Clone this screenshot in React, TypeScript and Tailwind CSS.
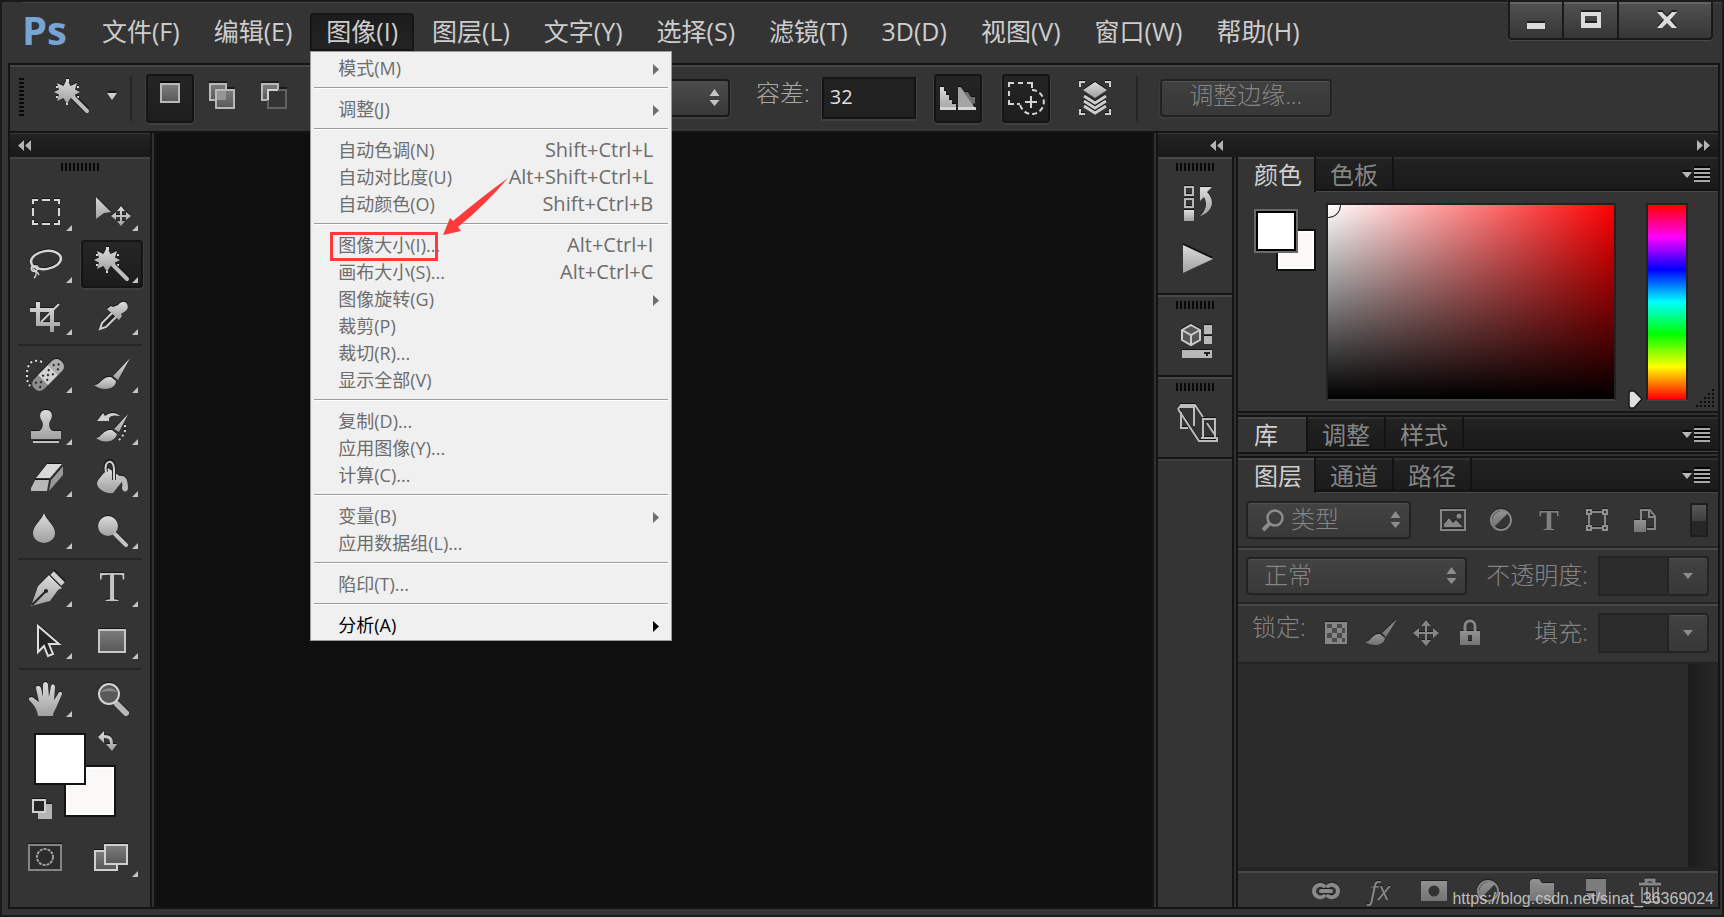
import { useState } from 'react';
import type { ReactNode } from 'react';
import clsx from 'clsx';

const menus = ['文件(F)', '编辑(E)', '图像(I)', '图层(L)', '文字(Y)', '选择(S)', '滤镜(T)', '3D(D)', '视图(V)', '窗口(W)', '帮助(H)'];

type MenuEntry = { label: string; keys?: string; sub?: boolean; enabled?: boolean; marked?: boolean };

const imageMenu: MenuEntry[][] = [
  [{ label: '模式(M)', sub: true }],
  [{ label: '调整(J)', sub: true }],
  [
    { label: '自动色调(N)', keys: 'Shift+Ctrl+L' },
    { label: '自动对比度(U)', keys: 'Alt+Shift+Ctrl+L' },
    { label: '自动颜色(O)', keys: 'Shift+Ctrl+B' },
  ],
  [
    { label: '图像大小(I)...', keys: 'Alt+Ctrl+I', marked: true },
    { label: '画布大小(S)...', keys: 'Alt+Ctrl+C' },
    { label: '图像旋转(G)', sub: true },
    { label: '裁剪(P)' },
    { label: '裁切(R)...' },
    { label: '显示全部(V)' },
  ],
  [{ label: '复制(D)...' }, { label: '应用图像(Y)...' }, { label: '计算(C)...' }],
  [{ label: '变量(B)', sub: true }, { label: '应用数据组(L)...' }],
  [{ label: '陷印(T)...' }],
  [{ label: '分析(A)', sub: true, enabled: true }],
];

// Shared gradients, referenced by id from every icon
function IconDefs() {
  return (
    <svg className="absolute size-0" aria-hidden="true">
      <defs>
        <linearGradient id="metal" x1="0" y1="0" x2="0" y2="1">
          <stop offset="0" stopColor="#dcdcdc" />
          <stop offset="1" stopColor="#a0a0a0" />
        </linearGradient>
        <linearGradient id="fill" x1="0" y1="0" x2="0" y2="1">
          <stop offset="0" stopColor="#7d7d7d" />
          <stop offset="1" stopColor="#585858" />
        </linearGradient>
        <linearGradient id="dim" x1="0" y1="0" x2="0" y2="1">
          <stop offset="0" stopColor="#929292" />
          <stop offset="1" stopColor="#747474" />
        </linearGradient>
      </defs>
    </svg>
  );
}

function WandShape() {
  return (
    <>
      <path d="M28 9l3.5 7 6.5-3-2 6.5 5 2.5-5 2.5 2 6.5-6.5-3-3.5 6-3.5-6-6.5 3 2-6.5-5-2.5 5-2.5-2-6.5 6.5 3z" fill="url(#metal)" />
      <path d="M27 9h3v3h-3zM17 16h2v2h-2zM38 16h2v2h-2zM17 26h2v2h-2zM38 26h2v2h-2zM27 33h2v2h-2z" fill="#d8d8d8" />
      <path d="M35 28l13 13" stroke="#1c1c1c" strokeWidth="6" />
      <path d="M35 28l13 13" stroke="#bdbdbd" strokeWidth="4" strokeLinecap="round" />
    </>
  );
}

const tools: { name: string; icon: ReactNode; plain?: boolean }[][] = [
  [
    { name: '矩形选框工具', icon: <path d="M20 18v-4h5M29 14h8M41 14h5v4M46 22v8M46 34v4h-5M37 38h-8M25 38h-5v-4M20 30v-8" fill="none" stroke="#dadada" strokeWidth="2" /> },
    {
      name: '移动工具',
      icon: (
        <>
          <path d="M17 11l15 15-7 1-8 6z" fill="url(#metal)" />
          <path d="M42 20l4 5h-3v4h4v-3l5 4-5 4v-3h-4v4h3l-4 5-4-5h3v-4h-4v3l-5-4 5-4v3h4v-4h-3z" fill="url(#metal)" />
        </>
      ),
    },
    {
      name: '套索工具',
      icon: (
        <g fill="none" stroke="#d6d6d6">
          <ellipse cx="33" cy="22" rx="15" ry="9" strokeWidth="2.5" transform="rotate(-9 33 22)" />
          <path d="M19 28c-2 3 0 6 3 5s4-4 2-5-5 1-4 3c3 2 5 3 6 6M22 33c2 2 1 5-1 7" strokeWidth="1.5" />
        </g>
      ),
    },
    { name: '魔棒工具', icon: <WandShape /> },
    {
      name: '裁剪工具',
      icon: (
        <>
          <path d="M17 18h24v24h-4V22H17zM23 12h4v20h20v4H23z" fill="url(#metal)" />
          <path d="M28 32l18-18" stroke="#cfcfcf" strokeWidth="2" />
        </>
      ),
    },
    {
      name: '吸管工具',
      icon: (
        <>
          <path d="M34 22l-11 11-2 6 6-2 11-11" fill="#262626" stroke="#cfcfcf" strokeWidth="2" />
          <path d="M39 15c2-3 7-5 9-1s0 6-3 8l-3 2 1 2-3 4-12-11 4-3 2 1z" fill="url(#metal)" />
        </>
      ),
    },
  ],
  [
    {
      name: '污点修复画笔工具',
      icon: (
        <>
          <g transform="rotate(-45 35 27)">
            <rect x="16" y="20" width="38" height="14" rx="6" fill="#8d8d8d" />
            <rect x="28" y="20" width="14" height="14" fill="#d2d2d2" />
            <path d="M42 20h6a6 6 0 0 1 6 6v2a6 6 0 0 1-6 6h-6z" fill="#adadad" />
            <path d="M20 23h2v2h-2zM20 29h2v2h-2zM24 26h2v2h-2zM30 23h2v2h-2zM30 29h2v2h-2zM34 26h2v2h-2zM38 23h2v2h-2zM38 29h2v2h-2zM45 23h2v2h-2zM45 29h2v2h-2zM49 26h2v2h-2z" fill="#262626" />
          </g>
          <path d="M29 14c-10-4-15 2-15 12v6l3 6" fill="none" stroke="#e0e0e0" strokeWidth="2" strokeDasharray="2 3" />
        </>
      ),
    },
    {
      name: '画笔工具',
      icon: (
        <>
          <path d="M51 10l-12 22-5-4z" fill="url(#metal)" />
          <path d="M32 29l5 4c0 8-13 11-22 4 7 0 8-9 17-8z" fill="url(#metal)" />
        </>
      ),
    },
    {
      name: '仿制图章工具',
      icon: (
        <>
          <path d="M33 10c7 0 7 7 4 11-2 4 0 9 3 10h8v8H18v-8h8c3-1 5-6 3-10-3-4-3-11 4-11z" fill="url(#metal)" />
          <path d="M20 41h26v2H20z" fill="#c0c0c0" />
        </>
      ),
    },
    {
      name: '历史记录画笔工具',
      icon: (
        <>
          <path d="M49 14L40 32l-5-3z" fill="url(#metal)" />
          <path d="M33 30l5 4c-2 8-13 10-21 4 6-1 7-9 16-8z" fill="url(#metal)" />
          <path d="M24 13l2 3c5-4 11-4 15 0-5-1-9-1-11 2l0 3H18z" fill="#cfcfcf" />
          <path d="M46 25v6l-3 6-5 5" fill="none" stroke="#dadada" strokeWidth="2" strokeDasharray="2 3" />
        </>
      ),
    },
    {
      name: '橡皮擦工具',
      icon: (
        <>
          <path d="M34 12h15l-12 14H23z" fill="#d8d8d8" />
          <path d="M22 28h14l-2 11H18v-3z" fill="#b8b8b8" />
          <path d="M38 28l12-14v9L36 39z" fill="#989898" />
        </>
      ),
    },
    {
      name: '油漆桶工具',
      icon: (
        <>
          <path d="M19 28l10-12 16 11-11 14c-8 1-16-4-16-10z" fill="url(#metal)" />
          <path d="M27 20c-3-12 8-14 8-3v11" fill="none" stroke="#262626" strokeWidth="4" />
          <path d="M27 20c-3-12 8-14 8-3v11" fill="none" stroke="#d2d2d2" strokeWidth="2" />
          <path d="M40 24c7-1 9 4 9 12 0 5-6 4-6 0 1-5 0-8-5-9z" fill="#bcbcbc" />
        </>
      ),
    },
    { name: '模糊工具', icon: <path d="M31 9c2 7 11 12 11 20a11 10 0 0 1-22 0c0-8 9-13 11-20z" fill="url(#metal)" /> },
    {
      name: '减淡工具',
      icon: (
        <>
          <path d="M36 30l11 11" stroke="#c4c4c4" strokeWidth="4" strokeLinecap="round" />
          <circle cx="29" cy="22" r="10" fill="url(#metal)" />
        </>
      ),
    },
  ],
  [
    {
      name: '钢笔工具',
      icon: (
        <>
          <path d="M36 13l13 13-4 2-8 11-19 5 7-20z" fill="url(#metal)" />
          <path d="M19 43l14-14" stroke="#222" strokeWidth="2" />
          <circle cx="33" cy="29" r="2" fill="#222" />
          <path d="M39 11l11 11" stroke="#222" strokeWidth="7" />
          <path d="M39 11l11 11" stroke="#cfcfcf" strokeWidth="5" />
        </>
      ),
    },
    { name: '横排文字工具', icon: <text x="33" y="39" textAnchor="middle" fontFamily="Liberation Serif, serif" fontSize="42" fill="#c6c6c6">T</text> },
    { name: '路径选择工具', icon: <path d="M25 12v26l6-6 4 10 5-2-4-10h10z" fill="#262626" stroke="#dedede" strokeWidth="2" /> },
    { name: '矩形工具', icon: <rect x="20" y="16" width="26" height="22" fill="url(#fill)" stroke="#c6c6c6" strokeWidth="2" /> },
  ],
  [
    {
      name: '抓手工具',
      icon: <path d="M16 26c2-2 4-1 6 1l4 3-3-14c0-3 4-3 5 0l2 9V13c0-4 5-4 5 0l1 12 2-11c1-3 4-2 4 1l-1 13 4-6c1-3 4-3 4 0l-6 14c-2 4-3 5-3 8H25c-1-8-5-12-9-16z" fill="url(#metal)" />,
    },
    {
      name: '缩放工具',
      plain: true,
      icon: (
        <>
          <path d="M38 32l9 9" stroke="#b8b8b8" strokeWidth="6" strokeLinecap="round" />
          <circle cx="30" cy="22" r="10" fill="#5a5a5a" stroke="#d4d4d4" strokeWidth="2" />
          <path d="M22 20c4-5 12-5 16 0-3-1-12-1-16 0z" fill="#8a8a8a" />
        </>
      ),
    },
  ],
];

function Grip({ className }: { className?: string }) {
  return <div className={clsx('mx-auto h-2 w-[38px] bg-[repeating-linear-gradient(90deg,#080808_0_2px,transparent_2px_4px)]', className)} />;
}

function VDivider() {
  return <div className="w-1.5 shrink-0 border-x-2 border-[#141414] bg-[#303030]" />;
}

function Chevrons({ flip }: { flip?: boolean }) {
  return (
    <svg width="14" height="11" viewBox="0 0 14 11" className={clsx('drop-shadow-[0_-1px_0_#000]', flip && 'rotate-180')} aria-hidden="true">
      <path d="M6 0v11L0 5.500zM13 0v11L7 5.500z" fill="#b4b4b4" />
    </svg>
  );
}

function UpDown({ className }: { className?: string }) {
  return (
    <svg width="11" height="17" viewBox="0 0 11 17" className={clsx('pointer-events-none absolute', className)} fill="currentColor" aria-hidden="true">
      <path d="M5.500 0l5 7h-10zM5.500 17l-5-6h10z" />
    </svg>
  );
}

function MenuIcon() {
  return (
    <button type="button" aria-label="面板菜单" className="mr-2 ml-auto flex items-center">
      <svg width="28" height="16" viewBox="0 0 28 16" className="drop-shadow-[0_-2px_0_#050505]">
        <path d="M0 5h10l-5 6z" fill="#b8b8b8" />
        <path d="M12 1h16v2H12zM12 5h16v2H12zM12 9h16v2H12zM12 13h16v2H12z" fill="#a8a8a8" />
      </svg>
    </button>
  );
}

function Tabs({ labels }: { labels: string[] }) {
  return (
    <div className="flex h-[35px] bg-linear-to-b from-[#222] to-[#1a1a1a] shadow-[inset_0_-1px_0_#484848,inset_0_-3px_0_#131313,inset_0_2px_0_#303030]" role="tablist">
      {labels.map((label, i) => (
        <button
          key={label}
          type="button"
          role="tab"
          aria-selected={i === 0}
          className={clsx(
            'border-r-2 border-[#131313] text-2xl leading-none',
            i === 0
              ? 'min-w-[70px] bg-[#343434] pr-3 pl-4 text-left text-[#cfcfcf] shadow-[inset_0_2px_0_#484848]'
              : 'mb-[3px] px-3.5 pt-[3px] text-[#858585]',
          )}
        >
          {label}
        </button>
      ))}
      <MenuIcon />
    </div>
  );
}

function ImageMenu() {
  return (
    <div role="menu" className="absolute top-full left-0 z-20 w-[362px] border border-[#9a9a9a] bg-[#f0f0f0] pt-[3px] pb-px">
      {imageMenu.map((group, g) => (
        <div key={group[0].label}>
          {g > 0 && <hr className="mx-[3px] mt-[5px] mb-[7px] h-0.5 border-t border-[#9d9d9d] bg-white" />}
          {group.map((item) => (
            <button
              key={item.label}
              type="button"
              role="menuitem"
              disabled={!item.enabled}
              className={clsx(
                'relative flex h-[27px] w-full items-center pr-[18px] pb-0.5 pl-[27px] text-lg leading-none',
                item.enabled ? 'text-black' : 'text-[#6d6d6d]',
              )}
            >
              {item.marked && <span className="absolute top-0 left-[19px] h-[29px] w-[108px] border-3 border-[#fb3a39]" />}
              {item.label}
              {item.keys && <span className="ml-auto text-xl leading-none">{item.keys}</span>}
              {item.sub && (
                <svg width="6" height="11" viewBox="0 0 6 11" className="-mr-1.5 ml-auto mt-1" fill="currentColor" aria-hidden="true">
                  <path d="M0 0l6 5.500L0 11z" />
                </svg>
              )}
            </button>
          ))}
        </div>
      ))}
      <svg width="66" height="58" viewBox="0 0 66 58" className="pointer-events-none absolute top-[126px] left-[132px]" aria-hidden="true">
        <path d="M65 0Q40 18 10 43L7 40 0 57l18-4-3-4Q42 27 65 0z" fill="#fb3a39" />
      </svg>
    </div>
  );
}

function MenuBar() {
  const [open, setOpen] = useState('图像(I)');
  return (
    <header className="flex h-[61px] border-t border-[#484848]">
      <div className="w-16 pt-[7px] text-[40px] leading-none font-bold text-[#78a4d4]">Ps</div>
      <nav className="flex gap-0.5 pt-[10px]">
        {menus.map((m) => (
          <div key={m} className="relative h-[38px]">
            <button
              type="button"
              onClick={() => setOpen(open === m ? '' : m)}
              className={clsx(
                'h-full rounded-t px-4 pb-0.5 text-[25px] leading-none whitespace-nowrap text-[#cdcdcd]',
                open === m && 'bg-linear-to-b from-[#1c1c1c] to-[#242424] shadow-[inset_0_0_0_2px_#161616]',
              )}
            >
              {m}
            </button>
            {m === '图像(I)' && open === m && <ImageMenu />}
          </div>
        ))}
      </nav>
      <div className="-mt-px mr-[9px] ml-auto flex h-[38px] rounded-b border-2 border-t-0 border-[#1a1a1a] bg-linear-to-b from-[#525252] to-[#363636] shadow-[0_1px_0_#4a4a4a,inset_0_2px_0_#646464]">
        <button type="button" aria-label="最小化" className="flex w-[54px] items-center justify-center border-r-2 border-[#1a1a1a]">
          <svg width="20" height="20" viewBox="0 0 20 20" className="drop-shadow-[0_-2px_0_#222]"><path d="M1 13h18v6H1z" fill="#dcdcdc" /></svg>
        </button>
        <button type="button" aria-label="最大化" className="flex w-[55px] items-center justify-center border-r-2 border-[#1a1a1a]">
          <svg width="20" height="20" viewBox="0 0 20 20" className="drop-shadow-[0_-2px_0_#222]"><path d="M0 2h20v16H0zM4 6v7h12V6z" fillRule="evenodd" fill="#dcdcdc" /></svg>
        </button>
        <button type="button" aria-label="关闭" className="flex w-[92px] items-center justify-center pl-1">
          <svg width="20" height="20" viewBox="0 0 20 20" className="drop-shadow-[0_-2px_0_#222]"><path d="M0 2h5l5 5 5-5h5l-7 8 7 8h-5l-5-5-5 5H0l7-8z" fill="#dcdcdc" /></svg>
        </button>
      </div>
    </header>
  );
}

function OptionButton({ label, active, children }: { label: string; active?: boolean; children: ReactNode }) {
  return (
    <button
      type="button"
      aria-label={label}
      aria-pressed={!!active}
      className={clsx(
        'flex h-[49px] w-12 shrink-0 items-center justify-center rounded',
        active && 'bg-linear-to-b from-[#252525] to-[#1d1d1d] shadow-[inset_0_0_0_2px_#151515,0_1px_0_1px_#404040]',
      )}
    >
      {children}
    </button>
  );
}

function OptionsBar() {
  return (
    <div className="flex h-[66px] items-center shadow-[inset_0_2px_0_#454545]">
      <div className="ml-[9px] h-10 w-[5px] shrink-0 bg-[repeating-linear-gradient(180deg,#080808_0_2px,transparent_2px_4px)]" />
      <button type="button" aria-label="魔棒工具预设" className="ml-[30px] flex shrink-0 items-center gap-4 pb-1">
        <svg width="36" height="36" viewBox="15 8 36 36" className="drop-shadow-[0_-1px_0_#151515]"><WandShape /></svg>
        <svg width="12" height="8" viewBox="0 0 12 8" className="drop-shadow-[0_-2px_0_#1a1a1a]"><path d="M1 1h10L6 8z" fill="#cfcfcf" /></svg>
      </button>
      <div className="mx-3 h-[45px] w-0.5 shrink-0 bg-[#252525]" />
      <div className="flex shrink-0 gap-1 pl-0.5">
        <OptionButton label="新选区" active>
          <svg width="20" height="30" viewBox="0 0 20 30" className="drop-shadow-[0_-2px_0_#080808]"><rect x="1" y="1" width="18" height="18" fill="url(#fill)" stroke="#b8b8b8" strokeWidth="2" /></svg>
        </OptionButton>
        <OptionButton label="添加到选区">
          <svg width="26" height="30" viewBox="0 0 26 30" className="drop-shadow-[0_-2px_0_#1a1a1a]">
            <path d="M1 1h16v16H1z" fill="url(#fill)" stroke="#b8b8b8" strokeWidth="2" />
            <path d="M7 7h18v18H7z" fill="url(#fill)" stroke="#b8b8b8" strokeWidth="2" />
            <path d="M8 8h9v9H8z" fill="#959595" />
          </svg>
        </OptionButton>
        <OptionButton label="从选区减去">
          <svg width="26" height="30" viewBox="0 0 26 30" className="drop-shadow-[0_-2px_0_#1a1a1a]">
            <path d="M1 1h16v16H1z" fill="url(#fill)" stroke="#b8b8b8" strokeWidth="2" />
            <path d="M7 7h18v18H7z" fill="#343434" stroke="#626262" strokeWidth="2" />
            <path d="M7 17V7h10" fill="none" stroke="#d0d0d0" strokeWidth="2" />
          </svg>
        </OptionButton>
        <OptionButton label="与选区交叉">
          <svg width="26" height="30" viewBox="0 0 26 30"><path d="M1 1h16v16H1zM7 7h18v18H7z" fill="none" stroke="#626262" strokeWidth="2" /></svg>
        </OptionButton>
      </div>
      <div className="relative ml-auto w-60 shrink-0 text-[#c4c4c4] min-[1600px]:ml-[140px]">
        <select aria-label="取样大小" className="h-[38px] w-full appearance-none rounded border-2 border-[#191919] bg-linear-to-b from-[#4c4c4c] to-[#383838] px-4 text-2xl leading-none font-light shadow-[0_1px_0_1px_#404040]">
          <option>取样点</option>
        </select>
        <UpDown className="top-2.5 right-2.5" />
      </div>
      <label htmlFor="tolerance" className="ml-[26px] shrink-0 pb-2.5 text-2xl leading-none font-light whitespace-nowrap text-[#a8a8a8]">容差:</label>
      <input id="tolerance" defaultValue="32" className="ml-3 h-[42px] w-[94px] border-2 border-[#151515] bg-[#212121] px-1.5 pb-1 text-xl text-[#e0e0e0] shadow-[0_1px_0_1px_#404040]" />
      <div className="ml-[18px] flex shrink-0 gap-5">
        <OptionButton label="消除锯齿" active>
          <svg width="36" height="26" viewBox="0 0 36 26" className="drop-shadow-[0_-1px_0_#080808]">
            <path d="M0 2h4v4h2v4h3v5h3v4h4v6H0z" fill="url(#metal)" />
            <path d="M18 2h3l4 5h3l3 5h4v7l-2-1v7H18z" fill="#707070" />
            <path d="M18 2h2l15 21v2H18z" fill="#a4a4a4" />
            <path d="M0 22h16v3H0zM18 22h18v3H18z" fill="#d4d4d4" />
          </svg>
        </OptionButton>
        <OptionButton label="连续" active>
          <svg width="38" height="36" viewBox="0 0 38 36" fill="none" stroke="#d4d4d4" strokeWidth="2">
            <path d="M2 7V3h5M11 3h5M20 3h5v5M2 11v5M2 20v4h5M10 24h3" />
            <path d="M25 10a12 12 0 1 1-12 14" strokeDasharray="5 3" />
            <path d="M24 16v12M18 22h12" />
          </svg>
        </OptionButton>
      </div>
      <button type="button" aria-label="对所有图层取样" className="ml-7 shrink-0">
        <svg width="34" height="36" viewBox="0 0 34 36" className="drop-shadow-[0_-1px_0_#111]" fill="none" stroke="#cccccc">
          <path d="M2 7V2h5M27 2h5v5M2 29v5h5M27 34h5v-5" strokeWidth="2" />
          <path d="M17 2l12 8-12 8-12-8z" fill="url(#metal)" stroke="none" />
          <path d="M6 16l11 7 11-7M6 21l11 7 11-7M6 26l11 7 11-7" strokeWidth="3" />
        </svg>
      </button>
      <div className="ml-6 h-[45px] w-0.5 shrink-0 bg-[#252525]" />
      <button type="button" disabled className="ml-[22px] h-[38px] w-[172px] shrink-0 rounded border-2 border-[#222] bg-linear-to-b from-[#404040] to-[#383838] pb-1.5 text-2xl leading-none font-light whitespace-nowrap text-[#858585] shadow-[inset_0_1px_0_#505050,0_1px_0_1px_#3c3c3c]">
        调整边缘...
      </button>
    </div>
  );
}

function ToolPanel() {
  const [active, setActive] = useState('魔棒工具');
  return (
    <aside className="flex w-[140px] shrink-0 flex-col">
      <div className="flex h-6 items-center bg-linear-to-b from-[#232323] to-[#191919] px-2 shadow-[inset_0_1px_0_#3a3a3a]">
        <Chevrons />
      </div>
      <div className="flex-1 border-t-2 border-[#454545] px-[3px] pt-1">
        <Grip />
        <div className="mt-[15px]">
          {tools.map((group, i) => (
            <div key={group[0].name}>
              {i > 0 && <hr className="mx-[5px] my-0.5 h-0.5 border-0 bg-[#252525]" />}
              <div className="grid grid-cols-[66px_66px]">
                {group.map((tool) => (
                  <button key={tool.name} type="button" aria-label={tool.name} onClick={() => setActive(tool.name)} className="flex h-[52px] items-center justify-center">
                    <span className={clsx('flex h-12 w-[62px] items-center justify-center rounded', active === tool.name && 'bg-linear-to-b from-[#262626] to-[#1c1c1c] shadow-[inset_0_0_0_2px_#151515,0_1px_0_1px_#404040]')}>
                      <svg width="66" height="52" viewBox="0 0 66 52" className="shrink-0">
                        <g className="drop-shadow-[0_-1px_0_#151515]">{tool.icon}</g>
                        {!tool.plain && <path d="M59 39v6h-6z" fill="#c4c4c4" />}
                      </svg>
                    </span>
                  </button>
                ))}
              </div>
            </div>
          ))}
        </div>
        {/* Foreground / background colours */}
        <div className="relative h-[107px]">
          <button type="button" aria-label="背景色" className="absolute top-[41px] left-[51px] size-[52px] border-2 border-[#141414] bg-[#faf9f8] shadow-[inset_0_0_0_2px_#fff]" />
          <button type="button" aria-label="前景色" className="absolute top-[9px] left-[21px] size-[52px] border-2 border-[#141414] bg-white" />
          <button type="button" aria-label="切换颜色" className="absolute top-1.5 left-[84px]">
            <svg width="22" height="22" viewBox="0 0 22 22" className="drop-shadow-[0_-1px_0_#151515]">
              <path d="M1 7l6-6v4c7 0 9 3 9 9h4l-5 7-6-7h4c0-4-1-6-6-6v5z" fill="url(#metal)" />
            </svg>
          </button>
          <button type="button" aria-label="默认颜色" className="absolute top-[74px] left-[19px]">
            <svg width="21" height="22" viewBox="0 0 21 22" className="drop-shadow-[0_-1px_0_#151515]">
              <path d="M6 6h14v15H6z" fill="#b4b4b4" />
              <path d="M1 2h12v12H1z" fill="#242424" stroke="#d0d0d0" strokeWidth="2" />
            </svg>
          </button>
        </div>
        <div className="grid grid-cols-[66px_66px]">
          <button type="button" aria-label="以快速蒙版模式编辑">
            <svg width="66" height="52" viewBox="0 0 66 52" className="drop-shadow-[0_-1px_0_#151515]">
              <rect x="16" y="14" width="32" height="25" fill="#2c2c2c" stroke="#858585" strokeWidth="2" />
              <circle cx="32" cy="26" r="8" fill="none" stroke="#a0a0a0" strokeWidth="2" strokeDasharray="3 1" />
            </svg>
          </button>
          <button type="button" aria-label="更改屏幕模式">
            <svg width="66" height="52" viewBox="0 0 66 52">
              <g className="drop-shadow-[0_-1px_0_#151515]" strokeWidth="2" stroke="#d0d0d0">
                <rect x="16" y="20" width="22" height="19" fill="url(#fill)" />
                <rect x="26" y="14" width="22" height="19" fill="url(#fill)" />
              </g>
              <path d="M59 40v6h-6z" fill="#c4c4c4" />
            </svg>
          </button>
        </div>
      </div>
    </aside>
  );
}

function DockColumn() {
  return (
    <div className="flex w-[74px] shrink-0 flex-col">
      <section className="h-[138px] border-b-2 border-[#141414] pt-1.5 shadow-[inset_0_2px_0_#484848]">
        <Grip />
        <button type="button" aria-label="历史记录" className="mt-3.5 flex w-full justify-center pl-1.5">
          <svg width="30" height="36" viewBox="0 0 30 36" className="drop-shadow-[0_-1px_0_#151515]">
            <path d="M2 2h8v8H2zM2 14h8v8H2z" fill="none" stroke="#b8b8b8" strokeWidth="2" />
            <path d="M1 25h10v11H1z" fill="url(#metal)" />
            <path d="M17 2h12l-5 5c9 9 5 20-7 24 6-6 8-12 4-19l-4 4z" fill="url(#metal)" />
          </svg>
        </button>
        <button type="button" aria-label="动作" className="mt-6 flex w-full justify-center pl-1.5">
          <svg width="32" height="28" viewBox="0 0 32 28" className="drop-shadow-[0_-2px_0_#111]"><path d="M1 0l30 14L1 28z" fill="url(#metal)" /></svg>
        </button>
      </section>
      <section className="h-[82px] border-b-2 border-[#141414] pt-1.5 shadow-[inset_0_2px_0_#484848]">
        <Grip />
        <button type="button" aria-label="属性" className="mt-3.5 flex w-full justify-center pl-1">
          <svg width="32" height="36" viewBox="0 0 32 36" className="drop-shadow-[0_-1px_0_#111]">
            <path d="M10 2l9 5v10l-9 5-9-5V7z" fill="#585858" stroke="#cccccc" strokeWidth="2" />
            <path d="M1 7l9 5 9-5M10 12v10" fill="none" stroke="#cccccc" strokeWidth="2" />
            <path d="M23 2h8v9h-8zM23 13h8v8h-8zM1 27h30v8H1z" fill="#b8b8b8" />
            <path d="M23 29h6v2h-2v2h-2v-2h-2z" fill="#222" />
          </svg>
        </button>
      </section>
      <section className="h-[82px] border-b-2 border-[#141414] pt-1.5 shadow-[inset_0_2px_0_#484848]">
        <Grip />
        <button type="button" aria-label="设备中心" className="mt-3 flex w-full justify-center pl-1.5">
          <svg width="42" height="42" viewBox="0 0 42 42" className="drop-shadow-[0_-1px_0_#111]" fill="none" stroke="#bcbcbc" strokeWidth="2">
            <path d="M1 6l3-4h14l8 12M1 6l21 32h18v-4M3 4h14v19M4 9v16h7" />
            <path d="M26 16h12v19H26zM30 20l8 12M24 35h14" />
          </svg>
        </button>
      </section>
      <div className="flex-1 shadow-[inset_0_2px_0_#404040]" />
    </div>
  );
}

function ColorPanel() {
  return (
    <section>
      <Tabs labels={['颜色', '色板']} />
      <div className="relative flex h-[219px] items-start pt-[11px] pr-[30px]">
        <div className="relative ml-4 h-20 w-[72px] shrink-0">
          <button type="button" aria-label="背景色" className="absolute top-[26px] left-[22px] h-[42px] w-10 border-2 border-[#101010] bg-[#faf9f8] shadow-[inset_0_0_0_2px_#fff]" />
          <button type="button" aria-label="前景色" className="absolute top-[6px] left-0 size-[44px] border-2 border-[#6a6a6a] bg-white shadow-[inset_0_0_0_2px_#000]" />
        </div>
        <div className="relative h-[198px] flex-1 overflow-hidden border-2 border-[#222] border-b-[#444] bg-[linear-gradient(to_top,#000,transparent),linear-gradient(to_right,#fff,#f00)]">
          <span className="absolute -top-3 -left-3 size-[25px] rounded-full border border-black" />
        </div>
        <div className="relative ml-[30px] h-[198px] w-[42px] shrink-0 border-2 border-[#222] border-b-[#444] bg-[linear-gradient(to_bottom,#f00,#f0f,#00f,#0ff,#0f0,#ff0,#f00)]">
          <svg width="15" height="19" viewBox="0 0 15 19" className="absolute -bottom-2.5 -left-5" aria-hidden="true">
            <path d="M2 1h4l8 8-8 9H2l-1-2V3z" fill="#dedede" stroke="#181818" strokeWidth="1.5" />
          </svg>
          <input type="range" aria-label="色相" defaultValue={0} className="absolute inset-0 h-full w-full opacity-0" />
        </div>
        <svg width="18" height="20" viewBox="0 0 18 20" className="absolute right-1 bottom-0.5" fill="#0c0c0c" aria-hidden="true">
          <path d="M16 0h2v2h-2zM16 4h2v2h-2zM12 4h2v2h-2zM16 8h2v2h-2zM12 8h2v2h-2zM8 8h2v2H8zM16 12h2v2h-2zM12 12h2v2h-2zM8 12h2v2H8zM4 12h2v2H4zM16 16h2v2h-2zM12 16h2v2h-2zM8 16h2v2H8zM4 16h2v2H4zM0 16h2v2H0z" />
        </svg>
      </div>
    </section>
  );
}

function PanelGap() {
  return <div className="h-1.5 shrink-0 border-y-2 border-[#141414] bg-[#303030]" />;
}

function PercentField({ id, label }: { id: string; label: string }) {
  return (
    <div className="mr-[9px] ml-auto flex items-center text-[#858585]">
      <label htmlFor={id} className="mr-2.5 pb-0.5 text-2xl leading-none font-light whitespace-nowrap">{label}</label>
      <input id={id} disabled className="h-10 w-[71px] border-2 border-[#242424] bg-[#2c2c2c] px-1" />
      <button type="button" disabled aria-label={`${label}选项`} className="flex h-10 w-10 items-center justify-center rounded-r border-2 border-l-0 border-[#242424] bg-linear-to-b from-[#424242] to-[#383838] shadow-[inset_0_1px_0_#505050]">
        <svg width="10" height="7" viewBox="0 0 10 7"><path d="M0 0h10L5 6z" fill="#8c8c8c" /></svg>
      </button>
    </div>
  );
}

function LayerIcon({ label, children, className }: { label: string; children: ReactNode; className?: string }) {
  return (
    <button type="button" disabled aria-label={label} className={clsx('flex items-center justify-center', className)}>
      <svg width="32" height="28" viewBox="0 0 32 28" className="overflow-visible drop-shadow-[0_-1px_0_#1c1c1c]">{children}</svg>
    </button>
  );
}

const halfCircle = (
  <>
    <circle cx="16" cy="14" r="10" fill="none" stroke="#868686" strokeWidth="2" />
    <path d="M23 7A10 10 0 0 0 9 21z" fill="url(#dim)" />
  </>
);

const selectClass = 'h-[38px] w-full appearance-none rounded border-2 border-[#222] bg-linear-to-b from-[#434343] to-[#393939] pb-0.5 text-2xl leading-none font-light text-[#858585] opacity-100 shadow-[inset_0_1px_0_#505050]';

function LayersPanel() {
  return (
    <section className="flex flex-1 flex-col">
      <Tabs labels={['图层', '通道', '路径']} />
      <div className="flex h-[55px] items-center border-b-2 border-[#242424] pl-2">
        <div className="relative w-[165px] shrink-0 text-[#8c8c8c]">
          <select disabled aria-label="筛选类型" className={clsx(selectClass, 'pl-[43px]')}>
            <option>类型</option>
          </select>
          <svg width="22" height="23" viewBox="0 0 22 23" className="pointer-events-none absolute top-2 left-4" fill="none" stroke="currentColor" aria-hidden="true">
            <circle cx="13" cy="9" r="7.5" strokeWidth="2.5" />
            <path d="M8 14l-7 7" strokeWidth="4" />
          </svg>
          <UpDown className="top-2.5 right-2.5" />
        </div>
        <div className="ml-[18px] flex">
          <LayerIcon label="像素图层滤镜" className="w-12">
            <path d="M4 4h24v20H4z" fill="none" stroke="#868686" strokeWidth="2" />
            <path d="M7 21v-3l5-6 4 5 3-3 6 6v1z" fill="#868686" />
            <circle cx="22" cy="10" r="2.5" fill="#868686" />
          </LayerIcon>
          <LayerIcon label="调整图层滤镜" className="w-12">{halfCircle}</LayerIcon>
          <LayerIcon label="文字图层滤镜" className="w-12">
            <text x="16" y="24" textAnchor="middle" fontFamily="Liberation Serif, serif" fontWeight="bold" fontSize="30" fill="#808080">T</text>
          </LayerIcon>
          <LayerIcon label="形状图层滤镜" className="w-12">
            <path d="M8 6h16v16H8z" fill="none" stroke="#868686" strokeWidth="2" />
            <path d="M6 4h4v4H6zM22 4h4v4h-4zM6 20h4v4H6zM22 20h4v4h-4z" fill="#2c2c2c" stroke="#909090" strokeWidth="2" />
          </LayerIcon>
          <LayerIcon label="智能对象滤镜" className="w-12">
            <path d="M12 14V4h9l5 6v13h-8M20 4v7h6" fill="none" stroke="#868686" strokeWidth="2" />
            <path d="M5 14h12v12H5z" fill="url(#dim)" />
          </LayerIcon>
        </div>
        <button type="button" disabled aria-label="打开或关闭图层滤镜" className="ml-[21px] flex h-[34px] w-[18px] items-start border-2 border-[#1e1e1e] bg-[#272727]">
          <span className="h-4 w-full bg-linear-to-b from-[#585858] to-[#3e3e3e]" />
        </button>
      </div>
      <div className="flex h-14 items-center border-t-2 border-b-2 border-t-[#484848] border-b-[#242424] pl-2">
        <div className="relative w-[221px] shrink-0 text-[#8c8c8c]">
          <select disabled aria-label="混合模式" className={clsx(selectClass, 'pl-4')}>
            <option>正常</option>
          </select>
          <UpDown className="top-2.5 right-2.5" />
        </div>
        <PercentField id="opacity" label="不透明度:" />
      </div>
      <div className="flex h-[60px] items-center border-t-2 border-b-2 border-t-[#484848] border-b-[#242424] pb-0.5 pl-3.5">
        <span className="pb-3 text-2xl leading-none font-light whitespace-nowrap text-[#858585]">锁定:</span>
        <div className="ml-2 flex">
          <LayerIcon label="锁定透明像素" className="w-[45px]">
            <path d="M5 3h22v22H5z" fill="#868686" />
            <path d="M7 5h5v4H7zM17 5h5v4h-5zM12 9h5v5h-5zM22 9h3v5h-3zM7 14h5v5H7zM17 14h5v5h-5zM12 19h5v4h-5zM22 19h3v4h-3z" fill="#4c4c4c" />
          </LayerIcon>
          <LayerIcon label="锁定图像像素" className="w-[45px]">
            <path d="M32 0L21 18l-4-4z" fill="url(#dim)" />
            <path d="M15 15l5 4c-1 8-12 9-20 4 7-1 7-9 15-8z" fill="url(#dim)" />
          </LayerIcon>
          <LayerIcon label="锁定位置" className="w-11">
            <path d="M16 1l5 6h-4v6h6V9l6 5-6 5v-4h-6v6h4l-5 6-5-6h4v-6H9v4l-6-5 6-5v4h6V7h-4z" fill="#868686" />
          </LayerIcon>
          <LayerIcon label="锁定全部" className="w-11">
            <path d="M11 13V7c0-7 10-7 10 0v6" fill="none" stroke="#868686" strokeWidth="3" />
            <path d="M6 12h20v14H6zM14 16v6h4v-6z" fillRule="evenodd" fill="url(#dim)" />
          </LayerIcon>
        </div>
        <PercentField id="fill-amount" label="填充:" />
      </div>
      <div className="flex flex-1 bg-[#2b2b2b]">
        <div className="ml-auto w-[30px] bg-linear-to-r from-[#1c1c1c] to-[#282828]" />
      </div>
      <footer className="flex h-10 items-center justify-end border-t-4 border-[#242424] pt-1 pr-[41px] shadow-[inset_0_2px_0_#484848]">
        <LayerIcon label="链接图层" className="w-[54px]">
          <path d="M14 9c-4-3-10 0-10 5s6 8 10 5M18 9c4-3 10 0 10 5s-6 8-10 5M11 14h10" fill="none" stroke="#8a8a8a" strokeWidth="4" strokeLinecap="round" />
        </LayerIcon>
        <LayerIcon label="图层样式" className="w-[54px]">
          <text x="16" y="23" textAnchor="middle" fontFamily="Open Sans, sans-serif" fontStyle="italic" fontWeight="500" fontSize="26" fill="#868686">fx</text>
        </LayerIcon>
        <LayerIcon label="添加蒙版" className="w-[54px]">
          <path d="M3 4h26v20H3z" fill="url(#dim)" />
          <circle cx="16" cy="14" r="5.5" fill="#333" />
        </LayerIcon>
        <LayerIcon label="新建调整图层" className="w-[54px]">{halfCircle}</LayerIcon>
        <LayerIcon label="新建组" className="w-[54px]">
          <path d="M4 4l2-2h7l3 4h12v18H4z" fill="url(#dim)" />
        </LayerIcon>
        <LayerIcon label="新建图层" className="w-[54px]">
          <path d="M6 2h20v22H16V14H6z" fill="#7c7c7c" />
          <path d="M6 16h8v8z" fill="#8c8c8c" />
        </LayerIcon>
        <LayerIcon label="删除图层" className="w-[54px]">
          <path d="M5 7h22M12 6V3h8v3" fill="none" stroke="#868686" strokeWidth="3" />
          <path d="M8 10v15h16V10M13 10v13M19 10v13" fill="none" stroke="#868686" strokeWidth="2" />
        </LayerIcon>
      </footer>
    </section>
  );
}

export default function App() {
  return (
    <div className="relative flex min-h-screen flex-col border-2 border-[#1a1a1a] bg-[#343434] pl-1.5 font-['Open_Sans','Noto_Sans_CJK_SC',sans-serif]">
      <IconDefs />
      <div className="pl-3.5">
        <MenuBar />
      </div>
      <div className="mr-0.5 mb-1.5 flex flex-1 flex-col border-2 border-[#141414]">
        <OptionsBar />
        <main className="flex flex-1 border-t-2 border-[#141414]">
          <ToolPanel />
          <VDivider />
          <div className="flex-1 bg-[#0f0f0f]" />
          <VDivider />
          <div className="flex flex-col">
            <div className="flex h-6 shrink-0 items-center bg-linear-to-b from-[#232323] to-[#191919] shadow-[inset_0_1px_0_#3a3a3a]">
              <div className="flex w-[74px] justify-end pr-2"><Chevrons /></div>
              <div className="ml-auto pr-2"><Chevrons flip /></div>
            </div>
            <div className="flex flex-1">
              <DockColumn />
              <VDivider />
              <div className="flex w-[480px] flex-col">
                <ColorPanel />
                <PanelGap />
                <Tabs labels={['库', '调整', '样式']} />
                <PanelGap />
                <LayersPanel />
              </div>
            </div>
          </div>
        </main>
      </div>
      <p className="pointer-events-none absolute right-2 bottom-1 font-['Liberation_Sans',sans-serif] text-base leading-6 text-[#cfcfcf]/90">https://blog.csdn.net/sinat_36369024</p>
    </div>
  );
}
